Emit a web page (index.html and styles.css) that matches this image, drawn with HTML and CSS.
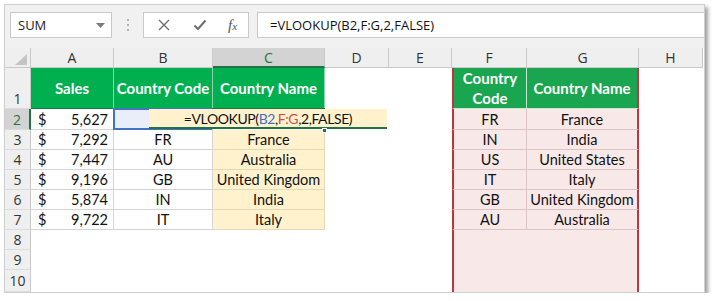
FILE: index.html
```html
<!DOCTYPE html>
<html>
<head>
<meta charset="utf-8">
<title>VLOOKUP</title>
<link rel="stylesheet" href="styles.css">
</head>
<body>
<div class="window">
  <div class="toolbar">
    <div class="namebox">
      <span>SUM</span>
      <svg class="dd" width="9" height="5" viewBox="0 0 9 5"><path d="M0 0H9L4.5 5Z" fill="#7b7b7b"/></svg>
    </div>
    <div class="grip"><i></i><i></i><i></i></div>
    <div class="btns">
      <svg class="ico" width="12" height="12" viewBox="0 0 12 12"><path d="M1 1L11 11M11 1L1 11" stroke="#6e6e6e" stroke-width="1.4" fill="none"/></svg>
      <svg class="ico" width="14" height="12" viewBox="0 0 14 12"><path d="M1.5 6.5L5 10L12.5 1.5" stroke="#6e6e6e" stroke-width="2" fill="none"/></svg>
      <span class="fx">f<span class="fxx">x</span></span>
    </div>
    <div class="formula">=VLOOKUP(B2,F:G,2,FALSE)</div>
  </div>

  <div class="sheet">
    <!-- column headers -->
    <div class="corner"><svg width="12" height="11" viewBox="0 0 12 11"><path d="M12 0V11H0Z" fill="#c4c4c4"/></svg></div>
    <div class="ch">A</div>
    <div class="ch">B</div>
    <div class="ch sel">C</div>
    <div class="ch">D</div>
    <div class="ch">E</div>
    <div class="ch">F</div>
    <div class="ch">G</div>
    <div class="ch">H</div>

    <!-- row 1 -->
    <div class="rh bottom">1</div>
    <div class="c hd">Sales</div>
    <div class="c hd">Country Code</div>
    <div class="c hd">Country Name</div>
    <div class="c"></div>
    <div class="c"></div>
    <div class="c hd2 lf">Country<br>Code</div>
    <div class="c hd2 rt">Country Name</div>
    <div class="c"></div>

    <!-- row 2 -->
    <div class="rh sel">2</div>
    <div class="c bd acc"><span>$</span><span>5,627</span></div>
    <div class="c bd ref"><div class="refbox"></div></div>
    <div class="c active">
      <div class="editor">=VLOOKUP(<span class="r1">B2</span>,<span class="r2">F:G</span>,2,FALSE)</div>
      <div class="handle"></div>
    </div>
    <div class="c"></div>
    <div class="c"></div>
    <div class="c pk lf">FR</div>
    <div class="c pk rt">France</div>
    <div class="c"></div>

    <!-- row 3 -->
    <div class="rh">3</div>
    <div class="c bd acc"><span>$</span><span>7,292</span></div>
    <div class="c bd ctr">FR</div>
    <div class="c yl">France</div>
    <div class="c"></div>
    <div class="c"></div>
    <div class="c pk lf">IN</div>
    <div class="c pk rt">India</div>
    <div class="c"></div>

    <!-- row 4 -->
    <div class="rh">4</div>
    <div class="c bd acc"><span>$</span><span>7,447</span></div>
    <div class="c bd ctr">AU</div>
    <div class="c yl">Australia</div>
    <div class="c"></div>
    <div class="c"></div>
    <div class="c pk lf">US</div>
    <div class="c pk rt">United States</div>
    <div class="c"></div>

    <!-- row 5 -->
    <div class="rh">5</div>
    <div class="c bd acc"><span>$</span><span>9,196</span></div>
    <div class="c bd ctr">GB</div>
    <div class="c yl">United Kingdom</div>
    <div class="c"></div>
    <div class="c"></div>
    <div class="c pk lf">IT</div>
    <div class="c pk rt">Italy</div>
    <div class="c"></div>

    <!-- row 6 -->
    <div class="rh">6</div>
    <div class="c bd acc"><span>$</span><span>5,874</span></div>
    <div class="c bd ctr">IN</div>
    <div class="c yl">India</div>
    <div class="c"></div>
    <div class="c"></div>
    <div class="c pk lf">GB</div>
    <div class="c pk rt">United Kingdom</div>
    <div class="c"></div>

    <!-- row 7 -->
    <div class="rh">7</div>
    <div class="c bd acc"><span>$</span><span>9,722</span></div>
    <div class="c bd ctr">IT</div>
    <div class="c yl">Italy</div>
    <div class="c"></div>
    <div class="c"></div>
    <div class="c pk lf">AU</div>
    <div class="c pk rt">Australia</div>
    <div class="c"></div>

    <!-- rows 8-10 -->
    <div class="rh">8</div>
    <div class="c"></div><div class="c"></div><div class="c"></div><div class="c"></div><div class="c"></div>
    <div class="c pe lf"></div><div class="c pe rt"></div><div class="c"></div>

    <div class="rh">9</div>
    <div class="c"></div><div class="c"></div><div class="c"></div><div class="c"></div><div class="c"></div>
    <div class="c pe lf"></div><div class="c pe rt"></div><div class="c"></div>

    <div class="rh">10</div>
    <div class="c"></div><div class="c"></div><div class="c"></div><div class="c"></div><div class="c"></div>
    <div class="c pe lf"></div><div class="c pe rt"></div><div class="c"></div>
  </div>
</div>
</body>
</html>
```

FILE: styles.css
```css
* { box-sizing: border-box; }

body {
  margin: 0;
  background: #ffffff;
  font-family: "Lato", "Open Sans", sans-serif;
  color: #111;
}

.window {
  margin: 4px 0 0 4px;
  width: 701px;
  height: 289px;
  border: 1px solid #cfcfcf;
  background: #ffffff;
  box-shadow: 3px 3px 4px rgba(0, 0, 0, 0.38);
  display: flex;
  flex-direction: column;
  overflow: hidden;
}

/* ---------- formula bar ---------- */
.toolbar {
  height: 43px;
  flex: none;
  background: #f1f1f1;
  display: flex;
  align-items: flex-start;
  padding: 7px 0 0 5px;
  font-family: "Open Sans", "Noto Sans", sans-serif;
}

.namebox {
  width: 102px;
  height: 26px;
  background: #fff;
  border: 1px solid #c9c9c9;
  display: flex;
  align-items: center;
  justify-content: space-between;
  padding: 0 6px 0 7px;
  font-size: 13px;
  color: #222;
}

.namebox .dd { margin-top: 1px; }

.grip {
  width: 31px;
  height: 26px;
  display: flex;
  flex-direction: column;
  align-items: center;
  justify-content: center;
  gap: 3px;
}
.grip i {
  display: block;
  width: 2px;
  height: 2px;
  background: #b3b3b3;
}

.btns {
  width: 106px;
  height: 26px;
  background: #fff;
  border: 1px solid #c9c9c9;
  display: flex;
  align-items: center;
  padding-left: 14px;
}
.btns .ico:first-child { margin-right: 23px; }
.btns .ico:nth-child(2) { margin-right: 21px; }
.fx {
  font-family: "Liberation Serif", serif;
  font-style: italic;
  font-size: 15px;
  color: #555;
  line-height: 1;
}
.fxx { font-size: 11px; }

.formula {
  flex: 1;
  height: 26px;
  margin-left: 8px;
  background: #fff;
  border: 1px solid #c9c9c9;
  border-right: none;
  display: flex;
  align-items: center;
  padding-left: 12px;
  font-size: 13px;
  color: #111;
}

/* ---------- grid ---------- */
.sheet {
  display: grid;
  grid-template-columns: 26px 83px 99px 112px 64px 63px 75px 112px 64px;
  grid-template-rows: 20px 41px 21px repeat(7, 20px) 22px;
  font-size: 14.5px;
}

.corner {
  background: #efefef;
  border-right: 1px solid #c9c9c9;
  border-bottom: 1px solid #c9c9c9;
  display: flex;
  align-items: flex-end;
  justify-content: flex-end;
  padding: 0 3px 2px 0;
}

.ch {
  background: #efefef;
  border-right: 1px solid #c9c9c9;
  border-bottom: 1px solid #c9c9c9;
  display: flex;
  align-items: center;
  justify-content: center;
  font-family: "Open Sans", "Noto Sans", sans-serif;
  font-size: 14px;
  color: #333;
}
.ch.sel {
  background: #d3d3d3;
  color: #217346;
  border-bottom: 2px solid #217346;
}

.rh {
  background: #efefef;
  border-right: 1px solid #c9c9c9;
  border-bottom: 1px solid #dcdcdc;
  display: flex;
  align-items: center;
  justify-content: center;
  font-family: "Open Sans", "Noto Sans", sans-serif;
  font-size: 14px;
  color: #333;
}
.rh.bottom { align-items: flex-end; }
.rh.sel {
  background: #d3d3d3;
  color: #217346;
  border-right: 2px solid #217346;
}

.c {
  position: relative;
  display: flex;
  align-items: center;
  justify-content: center;
  white-space: nowrap;
  padding: 0 4px;
}

.bd {
  border-right: 1px solid #d4d4d4;
  border-bottom: 1px solid #d4d4d4;
}

.acc {
  justify-content: space-between;
  padding: 0 5px 0 7px;
}

.hd {
  background: #00b050;
  color: #fff;
  font-weight: 700;
  font-size: 15px;
  border-right: 1px solid #8fd3ac;
  border-bottom: 1px solid #1a7a45;
}

.hd2 {
  background: #1aa650;
  color: #fff;
  font-weight: 700;
  font-size: 15px;
  text-align: center;
  line-height: 20px;
  border-right: 1px solid #c9e8d3;
  border-bottom: 1px solid #c9e8d3;
}

.yl {
  background: #fff2cc;
  border-right: 1px solid #e3d8b8;
  border-bottom: 1px solid #e3d8b8;
}

.pk {
  background: #f8e8e8;
  border-right: 1px solid #dcc5c5;
  border-bottom: 1px solid #dcc5c5;
}
.pe { background: #f8e8e8; }

.lf { border-left: 2px solid #c4343e; }
.rt { border-right: 2px solid #c4343e; }

/* reference highlight on B2 */
.refbox {
  position: absolute;
  left: -1px;
  top: -1px;
  bottom: -1px;
  right: 0;
  border: 2px solid #4472c4;
  background: #e9eef8;
}

/* in-cell editor over C2 */
.editor {
  position: absolute;
  left: -64px;
  top: 0;
  width: 238px;
  height: 20px;
  background: #fff2cc;
  border-bottom: 2px solid #217346;
  display: flex;
  align-items: center;
  justify-content: center;
  font-size: 14px;
  letter-spacing: -0.4px;
  color: #111;
  z-index: 2;
}
.active::before {
  content: "";
  position: absolute;
  left: -1px;
  right: 0;
  top: -1px;
  border-top: 1px solid #217346;
  z-index: 3;
}
.r1 { color: #3f6fc2; }
.r2 { color: #d24b50; }

.handle {
  position: absolute;
  right: -2px;
  bottom: -3px;
  width: 5px;
  height: 5px;
  background: #217346;
  border: 1px solid #fff;
  z-index: 4;
}
```
